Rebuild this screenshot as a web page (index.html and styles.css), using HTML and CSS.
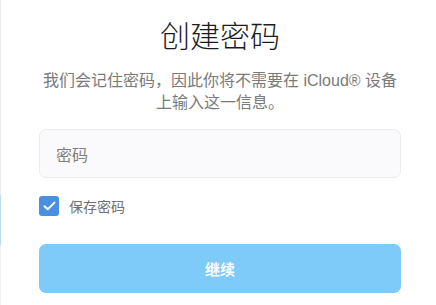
FILE: index.html
```html
<!DOCTYPE html>
<html lang="zh-CN">
<head>
<meta charset="utf-8">
<title>创建密码</title>
<link rel="stylesheet" href="styles.css">
</head>
<body>
<div class="page">
  <div class="edge">
    <div class="edge-top"></div>
    <div class="edge-blue"></div>
    <div class="edge-bottom"></div>
  </div>
  <main class="panel">
    <h1 class="title">创建密码</h1>
    <p class="subtitle">我们会记住密码，因此你将不需要在 iCloud® 设备上输入这一信息。</p>
    <div class="field"><span class="placeholder">密码</span></div>
    <label class="remember">
      <span class="check">
        <svg width="13" height="10" viewBox="0 0 13 10"><path d="M1.5 5.2 L4.8 8.3 L11.5 1.6" fill="none" stroke="#fff" stroke-width="2" stroke-linecap="round" stroke-linejoin="round"/></svg>
      </span>
      <span class="remember-text">保存密码</span>
    </label>
    <button class="continue" type="button">继续</button>
  </main>
</div>
</body>
</html>
```
FILE: styles.css
```css
html, body {
  margin: 0;
  padding: 0;
  background: #fff;
}
body {
  font-family: "Liberation Sans", "Noto Sans CJK SC", sans-serif;
}
.page {
  display: flex;
  width: 436px;
  height: 305px;
  overflow: hidden;
}
.edge {
  width: 1px;
  display: flex;
  flex-direction: column;
}
.edge-top { height: 195px; background: #ececec; }
.edge-blue { height: 50px; background: #b9dcf3; }
.edge-bottom { flex: 1; background: #f0f0f0; }
.panel {
  width: 362px;
  padding: 17px 0 0 38px;
  display: flex;
  flex-direction: column;
}
.title {
  margin: 0;
  font-size: 30px;
  line-height: 40px;
  font-weight: 300;
  color: #1c1c1c;
  text-align: center;
}
.subtitle {
  margin: 13px 0 0;
  font-size: 16px;
  line-height: 22px;
  color: #7a7a7a;
  text-align: center;
}
.field {
  margin-top: 15px;
  height: 47px;
  border: 1px solid #ececef;
  border-radius: 7px;
  background: #fafafc;
  display: flex;
  align-items: center;
  padding-left: 16px;
}
.placeholder {
  font-size: 16px;
  color: #7f7f7f;
}
.remember {
  margin-top: 18px;
  display: flex;
  align-items: center;
  gap: 10px;
  height: 20px;
}
.check {
  width: 20px;
  height: 20px;
  border-radius: 3px;
  background: #4a90e2;
  display: flex;
  align-items: center;
  justify-content: center;
}
.remember-text {
  font-size: 14px;
  color: #707070;
}
.continue {
  margin-top: 28px;
  height: 49px;
  border: none;
  border-radius: 7px;
  background: #7ecaf8;
  color: #fff;
  font-family: inherit;
  font-size: 15px;
  font-weight: 700;
  padding: 0;
}
```
